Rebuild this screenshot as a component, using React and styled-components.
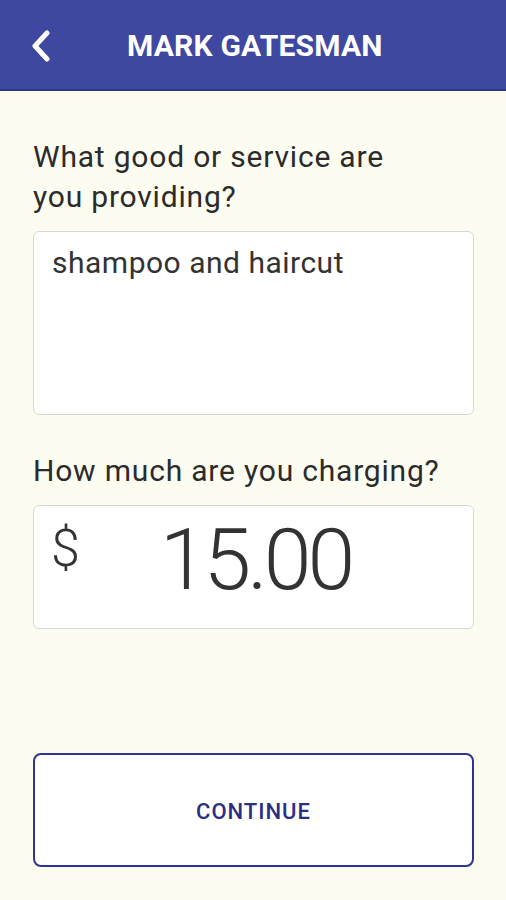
import React from "react";
import styled, { createGlobalStyle } from "styled-components";

const Global = createGlobalStyle`
  html, body { margin: 0; padding: 0; background: #fcfcf1; }
  body { font-family: Roboto, "Liberation Sans", sans-serif; }
  * { box-sizing: border-box; }
`;

const Screen = styled.div`
  width: 506px;
  height: 900px;
  background: #fcfcf1;
  display: flex;
  flex-direction: column;
`;

const Header = styled.header`
  height: 91px;
  background: #3f48a0;
  border-bottom: 2px solid #2c3590;
  display: flex;
  align-items: center;
  padding-left: 29px;
  padding-top: 3px;
  color: #ffffff;
`;

const BackButton = styled.button`
  background: none;
  border: none;
  padding: 0;
  width: 24px;
  height: 34px;
  display: flex;
  align-items: center;
  justify-content: center;
  color: #fff;
`;

const Title = styled.h1`
  margin: 0 0 0 74px;
  font-size: 30px;
  font-weight: 700;
  letter-spacing: 0.2px;
  line-height: 1;
`;

const Body = styled.main`
  flex: 1;
  display: flex;
  flex-direction: column;
  padding: 0 32px 0 33px;
`;

const Label = styled.label`
  display: block;
  margin-top: ${(p) => p.$top}px;
  font-size: 30px;
  line-height: 40px;
  color: #2b2b2b;
  letter-spacing: 0.8px;
`;

const Box = styled.div`
  margin-top: ${(p) => p.$top}px;
  height: ${(p) => p.$h}px;
  background: #ffffff;
  border: 1px solid #d8d8d2;
  border-radius: 6px;
`;

const ServiceText = styled.div`
  padding: 11px 0 0 18px;
  font-size: 30px;
  line-height: 40px;
  color: #333;
  letter-spacing: 0.5px;
`;

const AmountRow = styled.div`
  display: flex;
  align-items: flex-start;
  height: 100%;
  padding-left: 17px;
`;

const Dollar = styled.span`
  font-size: 52px;
  line-height: 1;
  margin-top: 17px;
  font-weight: 300;
  color: #333;
`;

const Amount = styled.span`
  font-size: 86px;
  line-height: 1;
  margin-left: 80px;
  margin-top: 11px;
  font-weight: 300;
  color: #333;
  letter-spacing: -4px;
`;

const Continue = styled.button`
  margin-top: ${(p) => p.$top}px;
  height: 114px;
  background: #ffffff;
  border: 2.5px solid #2b3595;
  border-radius: 8px;
  color: #2a2f85;
  font-family: Roboto, "Liberation Sans", sans-serif;
  font-size: 22px;
  letter-spacing: 1px;
  font-weight: 500;
  padding-top: 4px;
  cursor: pointer;
`;

export default function App() {
  return (
    <>
      <Global />
      <Screen>
        <Header>
          <BackButton aria-label="Back">
            <svg width="22" height="32" viewBox="0 0 22 32" fill="none">
              <path d="M17 3 L5 16 L17 29" stroke="#fff" strokeWidth="5" strokeLinecap="round" strokeLinejoin="round" />
            </svg>
          </BackButton>
          <Title>MARK GATESMAN</Title>
        </Header>
        <Body>
          <Label $top={46}>
            What good or service are
            <br />
            you providing?
          </Label>
          <Box $top={14} $h={184}>
            <ServiceText>shampoo and haircut</ServiceText>
          </Box>
          <Label $top={36}>How much are you charging?</Label>
          <Box $top={14} $h={124}>
            <AmountRow>
              <Dollar>$</Dollar>
              <Amount>15.00</Amount>
            </AmountRow>
          </Box>
          <Continue $top={124}>CONTINUE</Continue>
        </Body>
      </Screen>
    </>
  );
}
